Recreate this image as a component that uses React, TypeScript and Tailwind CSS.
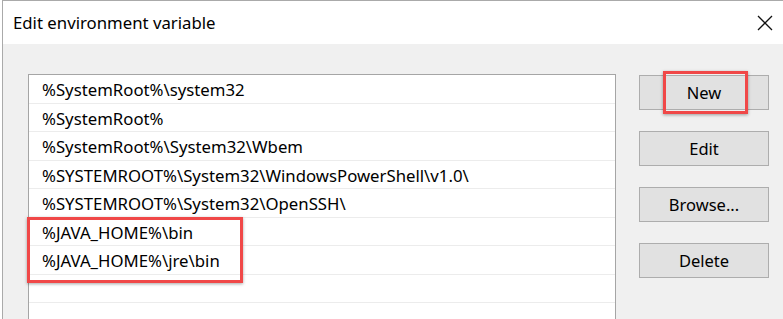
import React from "react";

const rows = [
  "%SystemRoot%\\system32",
  "%SystemRoot%",
  "%SystemRoot%\\System32\\Wbem",
  "%SYSTEMROOT%\\System32\\WindowsPowerShell\\v1.0\\",
  "%SYSTEMROOT%\\System32\\OpenSSH\\",
  "%JAVA_HOME%\\bin",
  "%JAVA_HOME%\\jre\\bin",
  "",
  "",
];

function Btn({ label, highlight }: { label: string; highlight?: boolean }) {
  return (
    <div className="relative w-[130px] h-[35px] bg-[#e1e1e1] border border-[#adadad] flex items-center justify-center text-[16.5px] text-black pt-[1px]">
      {label}
      {highlight && (
        <div className="absolute left-[23px] top-[-5px] w-[85px] h-[43px] border-[3px] border-[#f04848] shadow-[0_1px_3px_rgba(0,0,0,0.35)]" />
      )}
    </div>
  );
}

export default function App() {
  return (
    <div
      className="w-[783px] h-[319px] overflow-hidden bg-white"
      style={{ fontFamily: '"Noto Sans", "Open Sans", sans-serif' }}
    >
      <div className="ml-[2px] h-[319px] border-t border-l border-[#aaaaaa] flex flex-col">
        <div className="h-[43px] bg-white flex items-center pl-[10px] pr-[10px] shrink-0">
          <span className="text-[16.75px] text-black flex-1 pt-[1px]">Edit environment variable</span>
          <svg width="16" height="16" viewBox="0 0 16 16">
            <path d="M1 1 L15 15 M15 1 L1 15" stroke="#111" strokeWidth="1.3" />
          </svg>
        </div>
        <div className="flex-1 bg-[#f0f0f0] flex pt-[30px] pl-[25px]">
          <div className="relative w-[588px] h-[260px] bg-white border border-[#a5a5a5] shrink-0">
            {rows.map((r, i) => (
              <div
                key={i}
                className="h-[28.5px] border-b border-[#ececec] flex items-center pl-[13px] pt-[2px] text-[16.75px] text-black whitespace-nowrap"
              >
                {r}
              </div>
            ))}
            <div className="absolute left-[-2px] top-[142px] w-[216px] h-[66px] border-[3px] border-[#f04848] shadow-[0_1px_3px_rgba(0,0,0,0.35)]" />
          </div>
          <div className="ml-[23px] pt-[1px] flex flex-col gap-[21px]">
            <Btn label="New" highlight />
            <Btn label="Edit" />
            <Btn label="Browse..." />
            <Btn label="Delete" />
          </div>
        </div>
      </div>
    </div>
  );
}
